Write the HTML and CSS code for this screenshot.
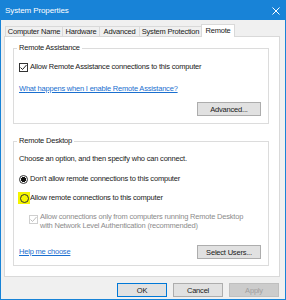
FILE: index.html
```html
<!DOCTYPE html>
<html lang="en">
<head>
    <meta charset="UTF-8">
    <meta name="viewport" content="width=device-width, initial-scale=1.0">
    <title>System Properties</title>
    <link rel="stylesheet" href="styles.css">
</head>
<body>
    <div class="window">
        <div class="titlebar">
            <span class="title">System Properties</span>
            <svg class="close" width="8" height="8" viewBox="0 0 8 8">
                <path d="M0.5 0.5 L7.5 7.5 M7.5 0.5 L0.5 7.5" stroke="#fff" stroke-width="1" fill="none"/>
            </svg>
        </div>

        <div class="dialog">
            <div class="tabs">
                <div class="tab tab-name">Computer Name</div>
                <div class="tab tab-hardware">Hardware</div>
                <div class="tab tab-advanced">Advanced</div>
                <div class="tab tab-protection">System Protection</div>
                <div class="tab tab-remote active">Remote</div>
            </div>

            <div class="panel">
                <div class="group group-assist">
                    <span class="group-title">Remote Assistance</span>
                    <div class="option">
                        <span class="checkbox">
                            <svg width="7" height="7" viewBox="0 0 7 7">
                                <path d="M0.5 3.5 L2.5 5.5 L6.5 1" stroke="#222" stroke-width="1" fill="none"/>
                            </svg>
                        </span>
                        Allow Remote Assistance connections to this computer
                    </div>
                    <a class="link link-assist" href="#">What happens when I enable Remote Assistance?</a>
                    <div class="actions actions-assist">
                        <button class="btn btn-wide">Advanced...</button>
                    </div>
                </div>

                <div class="group group-desktop">
                    <span class="group-title">Remote Desktop</span>
                    <p class="intro">Choose an option, and then specify who can connect.</p>
                    <div class="option option-first">
                        <span class="radio checked"></span>
                        Don't allow remote connections to this computer
                    </div>
                    <div class="option option-second">
                        <span class="radio-mark"><span class="radio"></span></span>
                        Allow remote connections to this computer
                    </div>
                    <div class="option option-nla">
                        <span class="checkbox disabled">
                            <svg width="7" height="7" viewBox="0 0 7 7">
                                <path d="M0.5 3.5 L2.5 5.5 L6.5 1" stroke="#bdbdbd" stroke-width="1" fill="none"/>
                            </svg>
                        </span>
                        <span>Allow connections only from computers running Remote Desktop<br>with Network Level Authentication (recommended)</span>
                    </div>
                    <div class="actions actions-desktop">
                        <a class="link" href="#">Help me choose</a>
                        <button class="btn btn-wide">Select Users...</button>
                    </div>
                </div>
            </div>

            <div class="footer">
                <button class="btn btn-default">OK</button>
                <button class="btn">Cancel</button>
                <button class="btn" disabled>Apply</button>
            </div>
        </div>
    </div>
</body>
</html>
```

FILE: styles.css
```css
* {
    margin: 0;
    padding: 0;
    box-sizing: border-box;
}

body {
    font-family: 'Liberation Sans', Arial, sans-serif;
    font-size: 7.5px;
    letter-spacing: -0.2px;
    line-height: 10px;
    color: #1a1a1a;
    background: #fff;
}

.window {
    width: 286px;
    height: 300px;
    border: 1px solid #1883d7;
    background: #f0f0f0;
    display: flex;
    flex-direction: column;
}

.titlebar {
    height: 19px;
    background: #1883d7;
    color: #fff;
    display: flex;
    align-items: center;
    justify-content: space-between;
    padding: 0 5px 0 4px;
}

.title {
    font-size: 8px;
    letter-spacing: -0.1px;
}

.dialog {
    flex: 1;
    display: flex;
    flex-direction: column;
    padding: 0 5px 0 3px;
}

/* tab strip */
.tabs {
    display: flex;
    align-items: flex-end;
    padding: 3px 0 0 1px;
    height: 16px;
}

.tab {
    height: 10px;
    line-height: 9px;
    text-align: center;
    border: 1px solid #d9d9d9;
    border-bottom: none;
    margin-right: -1px;
    background: #f0f0f0;
    white-space: nowrap;
}

.tab-name { width: 58px; }
.tab-hardware { width: 38px; }
.tab-advanced { width: 41px; }
.tab-protection { width: 63px; }
.tab-remote { width: 34px; }

.tab.active {
    height: 13px;
    line-height: 12px;
    background: #fff;
    margin-bottom: -1px;
    position: relative;
    z-index: 1;
}

.panel {
    background: #fff;
    border: 1px solid #d9d9d9;
    padding: 11px 10px 10px 8px;
}

/* group boxes */
.group {
    border: 1px solid #dcdcdc;
    padding: 0 6px 0 5px;
}

.group-desktop {
    margin-top: 17px;
}

.group-title {
    display: block;
    width: fit-content;
    margin: -6px 0 0 -2px;
    padding: 0 2px;
    background: #fff;
    line-height: 10px;
}

.option {
    display: flex;
    align-items: center;
    height: 10px;
    margin-top: 9px;
    white-space: nowrap;
}

.option-first {
    margin-top: 10px;
}

.option-nla {
    height: auto;
    align-items: flex-start;
    line-height: 9px;
    padding-left: 10px;
    color: #8c8c8c;
}

.checkbox {
    width: 9px;
    height: 9px;
    border: 1px solid #333;
    background: #fff;
    display: flex;
    align-items: center;
    justify-content: center;
    margin-right: 2px;
    flex-shrink: 0;
}

.checkbox.disabled {
    border-color: #cfcfcf;
    margin-top: 3px;
}

.radio {
    width: 9px;
    height: 9px;
    border: 1px solid #333;
    border-radius: 50%;
    background: #fff;
    margin-right: 2px;
    flex-shrink: 0;
}

.radio.checked {
    background: radial-gradient(circle, #111 0 2.3px, #fff 2.8px);
}

.radio-mark {
    display: flex;
    align-items: center;
    justify-content: center;
    width: 12px;
    height: 12px;
    margin: 0 0 0 -1px;
    background: #f5f500;
}

.radio-mark .radio {
    margin: 0;
    background: transparent;
}

.intro {
    margin-top: 8px;
    height: 10px;
}

.link {
    display: block;
    color: #1a6fcf;
    text-decoration: underline;
    margin-top: 12px;
    height: 10px;
}

.actions {
    display: flex;
    justify-content: flex-end;
    align-items: center;
    margin-top: 8px;
    padding-bottom: 7px;
}

.actions-desktop {
    justify-content: space-between;
    margin-top: 15px;
    padding-bottom: 6px;
}

.actions-desktop .link {
    margin-top: 0;
}

/* buttons */
.btn {
    font-family: inherit;
    font-size: 7.5px;
    letter-spacing: -0.2px;
    color: #1a1a1a;
    height: 14px;
    width: 50px;
    background: #e1e1e1;
    border: 1px solid #adadad;
}

.btn-wide {
    width: 64px;
    margin-right: 1px;
}

.btn-default {
    border-color: #0078d7;
}

.btn:disabled {
    background: #cccccc;
    border-color: #bfbfbf;
    color: #a0a0a0;
}

.footer {
    display: flex;
    justify-content: flex-end;
    gap: 6px;
    padding: 6px 1px 0 0;
}
```
